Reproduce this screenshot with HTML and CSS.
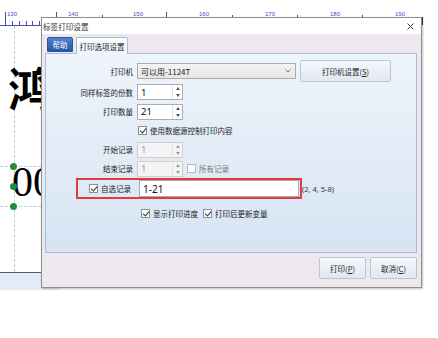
FILE: index.html
```html
<!DOCTYPE html>
<html>
<head>
<meta charset="utf-8">
<link rel="stylesheet" href="styles.css">
</head>
<body>
<div class="stage">
  <svg class="ruler" width="438" height="26" viewBox="0 0 438 26">
    <g stroke="#4a4ac0" stroke-width="1">
      <line x1="5.5" y1="12" x2="5.5" y2="25"/>
      <line x1="0" y1="25.5" x2="41" y2="25.5"/>
      <line x1="12.5" y1="21" x2="12.5" y2="25"/>
      <line x1="19.5" y1="21" x2="19.5" y2="25"/>
      <line x1="26.5" y1="21" x2="26.5" y2="25"/>
      <line x1="32.5" y1="21" x2="32.5" y2="25"/>
      <line x1="39.5" y1="21" x2="39.5" y2="25"/>
      <line x1="56.5" y1="12" x2="56.5" y2="25"/>
      <line x1="166.5" y1="12" x2="166.5" y2="25"/>
      <line x1="102.5" y1="15" x2="102.5" y2="25"/>
      <line x1="232.5" y1="15" x2="232.5" y2="25"/>
      <line x1="297.5" y1="15" x2="297.5" y2="25"/>
      <line x1="362.5" y1="15" x2="362.5" y2="25"/>
      <line x1="422.5" y1="17" x2="422.5" y2="25" stroke="#333"/>
    </g>
    <g fill="#4a4ac0" font-family="Liberation Sans, sans-serif" font-size="6">
      <text x="7" y="16">130</text>
      <text x="68" y="16">140</text>
      <text x="133" y="16">150</text>
      <text x="199" y="16">160</text>
      <text x="265" y="16">170</text>
      <text x="330" y="16">180</text>
      <text x="395" y="16">190</text>
    </g>
  </svg>

  <div class="guide-v"></div>
  <div class="guide-h guide-top"></div>
  <div class="guide-h guide-bot"></div>
  <div class="big-char">鸿</div>
  <div class="big-num">00</div>
  <span class="handle h1"></span>
  <span class="handle h2"></span>
  <span class="handle h3"></span>
  <div class="bottom-band"></div>

  <div class="dialog">
    <div class="titlebar">
      <span class="title">标签打印设置</span>
      <svg class="close" width="7" height="7" viewBox="0 0 7 7"><path d="M0.5 0.5 L6.5 6.5 M6.5 0.5 L0.5 6.5" stroke="#444" stroke-width="1"/></svg>
    </div>
    <div class="body">
      <div class="tabs">
        <span class="tab tab-help">帮助</span>
        <span class="tab tab-active">打印选项设置</span>
      </div>
      <div class="panel">
        <div class="row r1">
          <span class="lbl">打印机</span>
          <div class="select">
            <span>可以用-1124T</span>
            <svg width="6" height="4" viewBox="0 0 6 4"><path d="M0.5 0.5 L3 3 L5.5 0.5" fill="none" stroke="#777" stroke-width="1"/></svg>
          </div>
          <button class="btn btn-setup">打印机设置(<u>S</u>)</button>
        </div>
        <div class="row r2">
          <span class="lbl">同样标签的份数</span>
          <div class="spin"><span class="val">1</span><span class="arrows"><i class="up"></i><i class="down"></i></span></div>
        </div>
        <div class="row r3">
          <span class="lbl">打印数量</span>
          <div class="spin"><span class="val">21</span><span class="arrows"><i class="up"></i><i class="down"></i></span></div>
        </div>
        <div class="row r4">
          <span class="lbl"></span>
          <span class="chk on"></span><span class="ctext">使用数据源控制打印内容</span>
        </div>
        <div class="row r5">
          <span class="lbl">开始记录</span>
          <div class="spin disabled"><span class="val">1</span><span class="arrows"><i class="up"></i><i class="down"></i></span></div>
        </div>
        <div class="row r6">
          <span class="lbl">结束记录</span>
          <div class="spin disabled"><span class="val">1</span><span class="arrows"><i class="up"></i><i class="down"></i></span></div>
          <span class="chk all"></span><span class="ctext muted">所有记录</span>
        </div>
        <div class="row r7">
          <div class="redbox">
            <span class="chk on"></span><span class="ctext">自选记录</span>
            <div class="range">1-21</div>
          </div>
          <span class="hint">(2, 4, 5-8)</span>
        </div>
        <div class="row r8">
          <span class="chk on"></span><span class="ctext">显示打印进度</span>
          <span class="chk on second"></span><span class="ctext">打印后更新变量</span>
        </div>
      </div>
      <div class="footer">
        <button class="btn btn-foot">打印(<u>P</u>)</button>
        <button class="btn btn-foot">取消(<u>C</u>)</button>
      </div>
    </div>
  </div>
</div>
</body>
</html>
```

FILE: styles.css
```css
* { box-sizing: border-box; }
html, body { margin: 0; padding: 0; background: #fff; }
body {
  font-family: "Noto Sans CJK SC", "Noto Sans", sans-serif;
  font-size: 7.5px;
  color: #222;
}
.stage {
  position: relative;
  width: 438px;
  height: 338px;
  overflow: hidden;
  background: #fff;
}
.ruler { position: absolute; left: 0; top: 0; }

.guide-v {
  position: absolute;
  left: 14px; top: 26px;
  width: 0; height: 246px;
  border-left: 1px dashed #a9d2e6;
}
.guide-h {
  position: absolute;
  left: 0; width: 41px; height: 0;
  border-top: 1px dashed #a9d2e6;
}
.guide-top { top: 166px; }
.guide-bot { top: 206px; }

.big-char {
  position: absolute;
  left: 8px; top: 63px;
  font-family: "Noto Sans CJK SC", sans-serif;
  font-weight: 700;
  font-size: 46px;
  line-height: 1;
  color: #000;
}
.big-num {
  position: absolute;
  left: 12px; top: 161px;
  font-family: "Liberation Serif", serif;
  font-size: 42px;
  line-height: 1;
  color: #000;
}
.handle {
  position: absolute;
  left: 10px;
  width: 7px; height: 7px;
  border-radius: 50%;
  background: #2a8a3a;
}
.h1 { top: 163px; }
.h2 { top: 183px; }
.h3 { top: 203px; }

.bottom-band {
  position: absolute;
  left: 0; top: 272px;
  width: 60px; height: 18px;
  border-top: 1px solid #5a5a5a;
  background: #e3ebf6;
}

.dialog {
  position: absolute;
  left: 41px; top: 17px;
  width: 381px; height: 271px;
  border: 1px solid #8d8d8d;
  box-shadow: 1px 1px 2px rgba(0,0,0,0.25);
  display: flex;
  flex-direction: column;
  background: #ece8ee;
}
.titlebar {
  height: 16px;
  background: #fff;
  display: flex;
  align-items: center;
  justify-content: space-between;
  padding: 0 7px 0 1px;
  flex: none;
}
.title { font-size: 7.6px; color: #333; }
.close { display: block; }

.body { flex: 1; display: flex; flex-direction: column; }
.tabs {
  height: 19px;
  display: flex;
  align-items: flex-end;
  padding-left: 5px;
  gap: 3px;
  flex: none;
}
.tab {
  display: flex; align-items: center; justify-content: center;
  font-size: 7.5px;
}
.tab-help {
  width: 26px; height: 15px;
  margin-bottom: 1px;
  color: #fff;
  background: linear-gradient(#4f82c8, #2559a6);
  border: 1px solid #2a5496;
  border-radius: 2px 2px 0 0;
}
.tab-active {
  width: 52px; height: 17px;
  color: #222;
  background: linear-gradient(#fafcff, #eef4fb);
  border: 1px solid #a8bed8;
  border-bottom: none;
  border-radius: 2px 2px 0 0;
  position: relative;
  top: 1px;
}
.panel {
  margin: 0 4px 0 3px;
  height: 200px;
  flex: none;
  border: 1px solid #a8bed8;
  background: linear-gradient(#eef4fb, #d6e4f3);
  padding-top: 6px;
  display: flex;
  flex-direction: column;
}
.row { display: flex; align-items: center; flex: none; }
.r1 { height: 22px; }
.r2 { height: 20px; }
.r3, .r4, .r5, .r6 { height: 19px; }
.r7 { height: 21px; }
.r8 { height: 20px; margin-top: 4px; padding-left: 95px; }

.lbl {
  width: 87px;
  margin-right: 4px;
  text-align: right;
  flex: none;
}
.select {
  width: 159px; height: 16px;
  border: 1px solid #acacac;
  background: linear-gradient(#f3f3f3, #e6e6e6);
  display: flex; align-items: center; justify-content: space-between;
  padding: 0 4px 0 3px;
  font-size: 8px;
}
.select svg { display: block; }
.btn {
  font-family: "Noto Sans CJK SC", sans-serif;
  font-size: 7.5px;
  color: #222;
  border: 1px solid #bcc6d3;
  border-radius: 2px;
  background: linear-gradient(#f5f8fc, #dfe7f1);
  padding: 0;
  display: flex; align-items: center; justify-content: center;
}
.btn u { text-decoration: underline; }
.btn-setup { width: 91px; height: 22px; margin-left: 4px; }

.spin {
  width: 46px; height: 16px;
  border: 1px solid #abadb3;
  background: #fff;
  display: flex; align-items: center; justify-content: space-between;
  padding-left: 3px;
}
.val { font-family: "Noto Sans", sans-serif; font-size: 9.5px; color: #111; }
.arrows {
  width: 10px; height: 14px;
  display: flex; flex-direction: column; justify-content: space-between;
  align-items: center;
  border-left: 1px solid #e2e2e2;
  padding: 2px 0;
}
.arrows i { width: 0; height: 0; border-left: 2px solid transparent; border-right: 2px solid transparent; }
.arrows .up { border-bottom: 3px solid #555; }
.arrows .down { border-top: 3px solid #555; }
.spin.disabled { background: #f4f4f4; border-color: #cfcfcf; }
.spin.disabled .val { color: #9a9a9a; }
.spin.disabled .arrows .up { border-bottom-color: #9a9a9a; }
.spin.disabled .arrows .down { border-top-color: #9a9a9a; }

.chk {
  width: 9px; height: 9px;
  border: 1px solid #8e8f8f;
  background: #fff;
  flex: none;
  position: relative;
  margin-right: 3px;
}
.chk.on::after {
  content: "";
  position: absolute;
  left: 2px; top: 0px;
  width: 3px; height: 5px;
  border: solid #333;
  border-width: 0 1px 1px 0;
  transform: rotate(40deg);
}
.r4 .chk { margin-left: 1px; }
.chk.all { margin-left: 4px; border-color: #b8b8b8; }
.chk.second { margin-left: 5px; }
.ctext { white-space: nowrap; }
.muted { color: #777; }

.r7 { padding-left: 30px; }
.redbox {
  width: 226px; height: 21px;
  border: 2px solid #e23b3b;
  display: flex; align-items: center;
  padding-left: 11px;
}
.range {
  margin-left: 8px;
  width: 160px; height: 17px;
  border: 1px solid #abadb3;
  background: #fff;
  font-family: "Noto Sans", sans-serif;
  font-size: 10px;
  display: flex; align-items: center;
  padding-left: 3px;
  color: #111;
}
.hint {
  margin-left: 0px;
  font-family: "Noto Sans", sans-serif;
  font-size: 7.5px;
  color: #333;
}

.footer {
  flex: 1;
  display: flex;
  justify-content: flex-end;
  align-items: flex-start;
  gap: 4px;
  padding: 4px 4px 0 0;
}
.btn-foot { width: 47px; height: 22px; }
```
